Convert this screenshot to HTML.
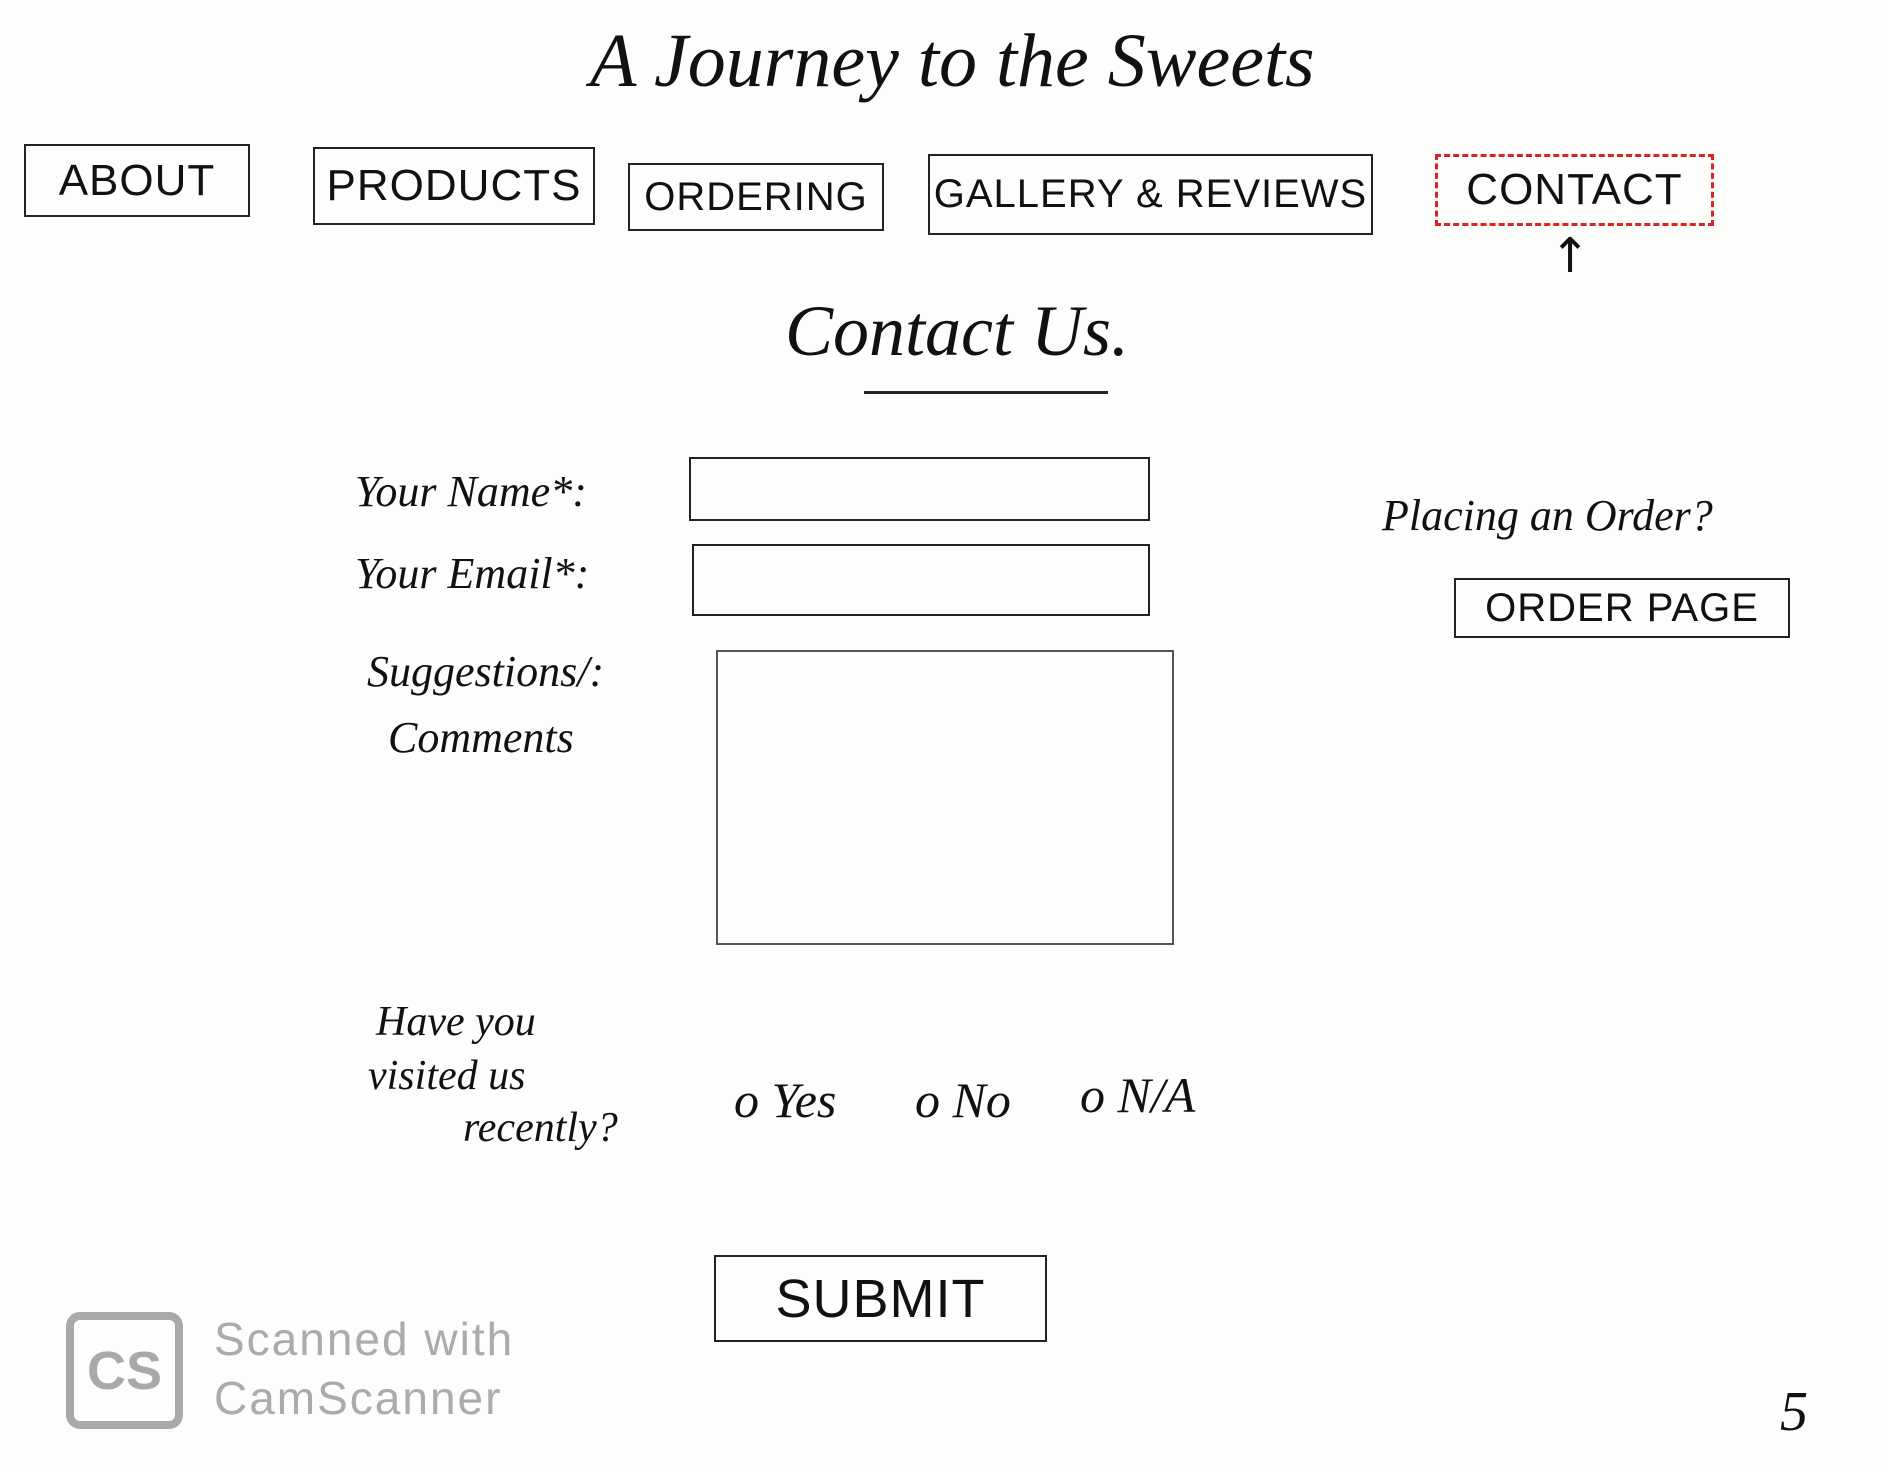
<!DOCTYPE html>
<html><head><meta charset="utf-8"><style>
html,body{margin:0;padding:0;background:#fdfdfc;}
body{width:1888px;height:1472px;position:relative;overflow:hidden;font-family:"Liberation Serif",serif;color:#111;}
.a{position:absolute;white-space:nowrap;}
.box{position:absolute;border:2.5px solid #222;box-sizing:border-box;}
.nav{position:absolute;border:2.5px solid #222;box-sizing:border-box;display:flex;align-items:center;justify-content:center;font-family:"Liberation Sans",sans-serif;font-size:44px;letter-spacing:1px;}
.hw{font-family:"Liberation Serif",serif;font-style:italic;font-size:44px;}
</style></head><body>
<div class="a" style="left:590px;top:18px;font-size:76px;font-style:italic;font-family:'Liberation Serif',serif;">A Journey to the Sweets</div>

<div class="nav" style="left:24px;top:144px;width:226px;height:73px;">ABOUT</div>
<div class="nav" style="left:313px;top:147px;width:282px;height:78px;">PRODUCTS</div>
<div class="nav" style="left:628px;top:163px;width:256px;height:68px;font-size:40px;">ORDERING</div>
<div class="nav" style="left:928px;top:154px;width:445px;height:81px;font-size:40px;">GALLERY &amp; REVIEWS</div>
<div class="nav" style="left:1435px;top:154px;width:279px;height:72px;border:3px dashed #d22;">CONTACT</div>
<div class="a" style="left:1550px;top:228px;font-size:48px;font-family:'DejaVu Sans',sans-serif;">↑</div>

<div class="a" style="left:785px;top:290px;font-size:72px;font-style:italic;">Contact Us.</div>
<div class="a" style="left:864px;top:391px;width:244px;height:3px;background:#222;"></div>

<div class="a hw" style="left:355px;top:466px;">Your Name*:</div>
<div class="box" style="left:689px;top:457px;width:461px;height:64px;"></div>
<div class="a hw" style="left:355px;top:548px;">Your Email*:</div>
<div class="box" style="left:692px;top:544px;width:458px;height:72px;"></div>
<div class="a hw" style="left:367px;top:646px;">Suggestions/:</div>
<div class="a hw" style="left:388px;top:712px;">Comments</div>
<div class="box" style="left:716px;top:650px;width:458px;height:295px;border-width:2px;border-color:#555;"></div>

<div class="a hw" style="left:376px;top:998px;font-size:42px;">Have you</div>
<div class="a hw" style="left:368px;top:1052px;font-size:42px;">visited us</div>
<div class="a hw" style="left:463px;top:1104px;font-size:42px;">recently?</div>
<div class="a hw" style="left:734px;top:1071px;font-size:50px;">o Yes</div>
<div class="a hw" style="left:915px;top:1071px;font-size:50px;">o No</div>
<div class="a hw" style="left:1080px;top:1066px;font-size:50px;">o N/A</div>

<div class="nav" style="left:714px;top:1255px;width:333px;height:87px;font-size:54px;">SUBMIT</div>

<div class="a hw" style="left:1382px;top:490px;">Placing an Order?</div>
<div class="nav" style="left:1454px;top:578px;width:336px;height:60px;font-size:40px;">ORDER PAGE</div>

<div class="a" style="left:66px;top:1312px;width:117px;height:117px;border:8px solid #a9a9a9;border-radius:14px;box-sizing:border-box;display:flex;align-items:center;justify-content:center;font-family:'Liberation Sans',sans-serif;font-weight:bold;font-size:54px;color:#a9a9a9;">CS</div>
<div class="a" style="left:214px;top:1312px;font-family:'Liberation Sans',sans-serif;font-size:46px;color:#ababab;letter-spacing:2px;">Scanned with</div>
<div class="a" style="left:214px;top:1371px;font-family:'Liberation Sans',sans-serif;font-size:46px;color:#ababab;letter-spacing:2px;">CamScanner</div>
<div class="a hw" style="left:1780px;top:1380px;font-size:56px;">5</div>
</body></html>
